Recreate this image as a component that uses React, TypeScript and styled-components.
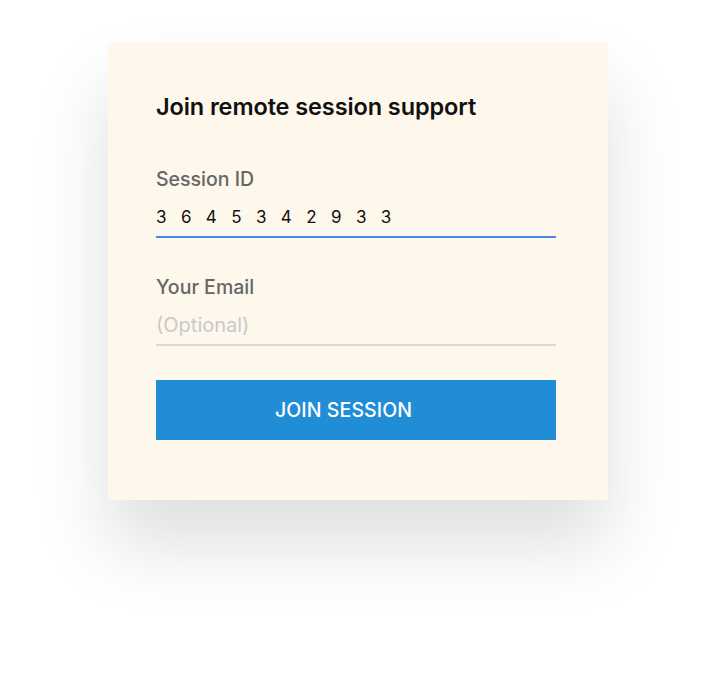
import React from "react";
import styled, { createGlobalStyle } from "styled-components";

const GlobalStyle = createGlobalStyle`
    html, body {
        margin: 0;
        padding: 0;
        background: #ffffff;
    }
    body {
        font-family: Inter, "Noto Sans", "Liberation Sans", sans-serif;
    }
`;

const Page = styled.div`
    width: 716px;
    height: 674px;
    padding-top: 42px;
    padding-left: 108px;
    box-sizing: border-box;
`;

const Card = styled.div`
    width: 500px;
    height: 458px;
    box-sizing: border-box;
    padding: 51px 52px 60px 48px;
    background: #fef7ec;
    box-shadow: 0 45px 70px rgba(0, 0, 0, 0.13);
    display: flex;
    flex-direction: column;
`;

const Title = styled.h2`
    margin: 0 0 46px;
    font-size: 23.5px;
    line-height: 28px;
    font-weight: 600;
    color: #111111;
    letter-spacing: -0.1px;
`;

const Field = styled.div<{ $gapAfter: number }>`
    display: flex;
    flex-direction: column;
    gap: 14px;
    margin-bottom: ${(p) => p.$gapAfter}px;
`;

const Label = styled.label`
    font-size: 19.5px;
    line-height: 24px;
    font-weight: 500;
    color: #666666;
`;

const Input = styled.div<{ $active?: boolean; $placeholder?: boolean }>`
    height: 24px;
    padding-bottom: 7px;
    font-size: ${(p) => (p.$placeholder ? "20px" : "17px")};
    line-height: 24px;
    color: ${(p) => (p.$placeholder ? "#c9c9c9" : "#111111")};
    letter-spacing: ${(p) => (p.$placeholder ? "0" : "14.4px")};
    border-bottom: 2px solid ${(p) => (p.$active ? "#4a86e6" : "#d9d9d9")};
`;

const Button = styled.button`
    flex-shrink: 0;
    width: 400px;
    height: 60px;
    border: none;
    padding: 0 25px 0 0;
    background: #218dd6;
    color: #ffffff;
    font-family: inherit;
    font-size: 19.5px;
    font-weight: 500;
    letter-spacing: 0.1px;
    cursor: pointer;
`;

export default function App() {
    return (
        <>
            <GlobalStyle />
            <Page>
                <Card>
                    <Title>Join remote session support</Title>
                    <Field $gapAfter={37}>
                        <Label>Session ID</Label>
                        <Input $active>3645342933</Input>
                    </Field>
                    <Field $gapAfter={34}>
                        <Label>Your Email</Label>
                        <Input $placeholder>(Optional)</Input>
                    </Field>
                    <Button>JOIN SESSION</Button>
                </Card>
            </Page>
        </>
    );
}
